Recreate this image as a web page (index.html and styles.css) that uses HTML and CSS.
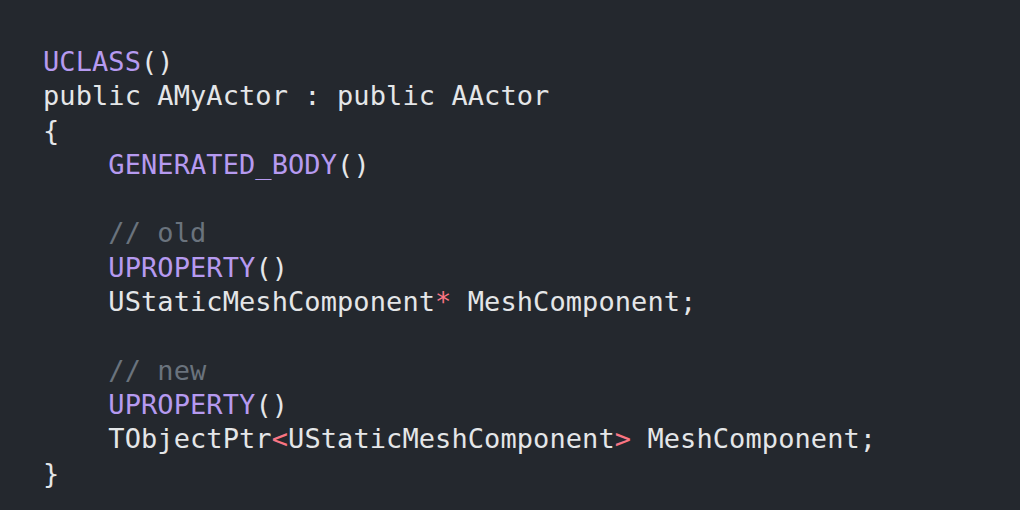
FILE: index.html
```html
<!DOCTYPE html>
<html>
<head>
<meta charset="utf-8">
<link rel="stylesheet" href="styles.css">
</head>
<body>
<pre class="code"><span class="mac">UCLASS</span>()
public AMyActor : public AActor
{
    <span class="mac">GENERATED_BODY</span>()

    <span class="cm">// old</span>
    <span class="mac">UPROPERTY</span>()
    UStaticMeshComponent<span class="op">*</span> MeshComponent;

    <span class="cm">// new</span>
    <span class="mac">UPROPERTY</span>()
    TObjectPtr<span class="op">&lt;</span>UStaticMeshComponent<span class="op">&gt;</span> MeshComponent;
}</pre>
</body>
</html>
```
FILE: styles.css
```css
html, body {
  margin: 0;
  padding: 0;
  background: #24282e;
  width: 1020px;
  height: 510px;
  overflow: hidden;
}
.code {
  margin: 0;
  padding: 45px 0 0 43px;
  font-family: "DejaVu Sans Mono", "Liberation Mono", monospace;
  font-size: 27px;
  letter-spacing: 0.08px;
  line-height: 34.3px;
  color: #e4e6e8;
}
.mac { color: #b69af0; }
.cm { color: #6a737d; }
.op { color: #f97583; }
```
